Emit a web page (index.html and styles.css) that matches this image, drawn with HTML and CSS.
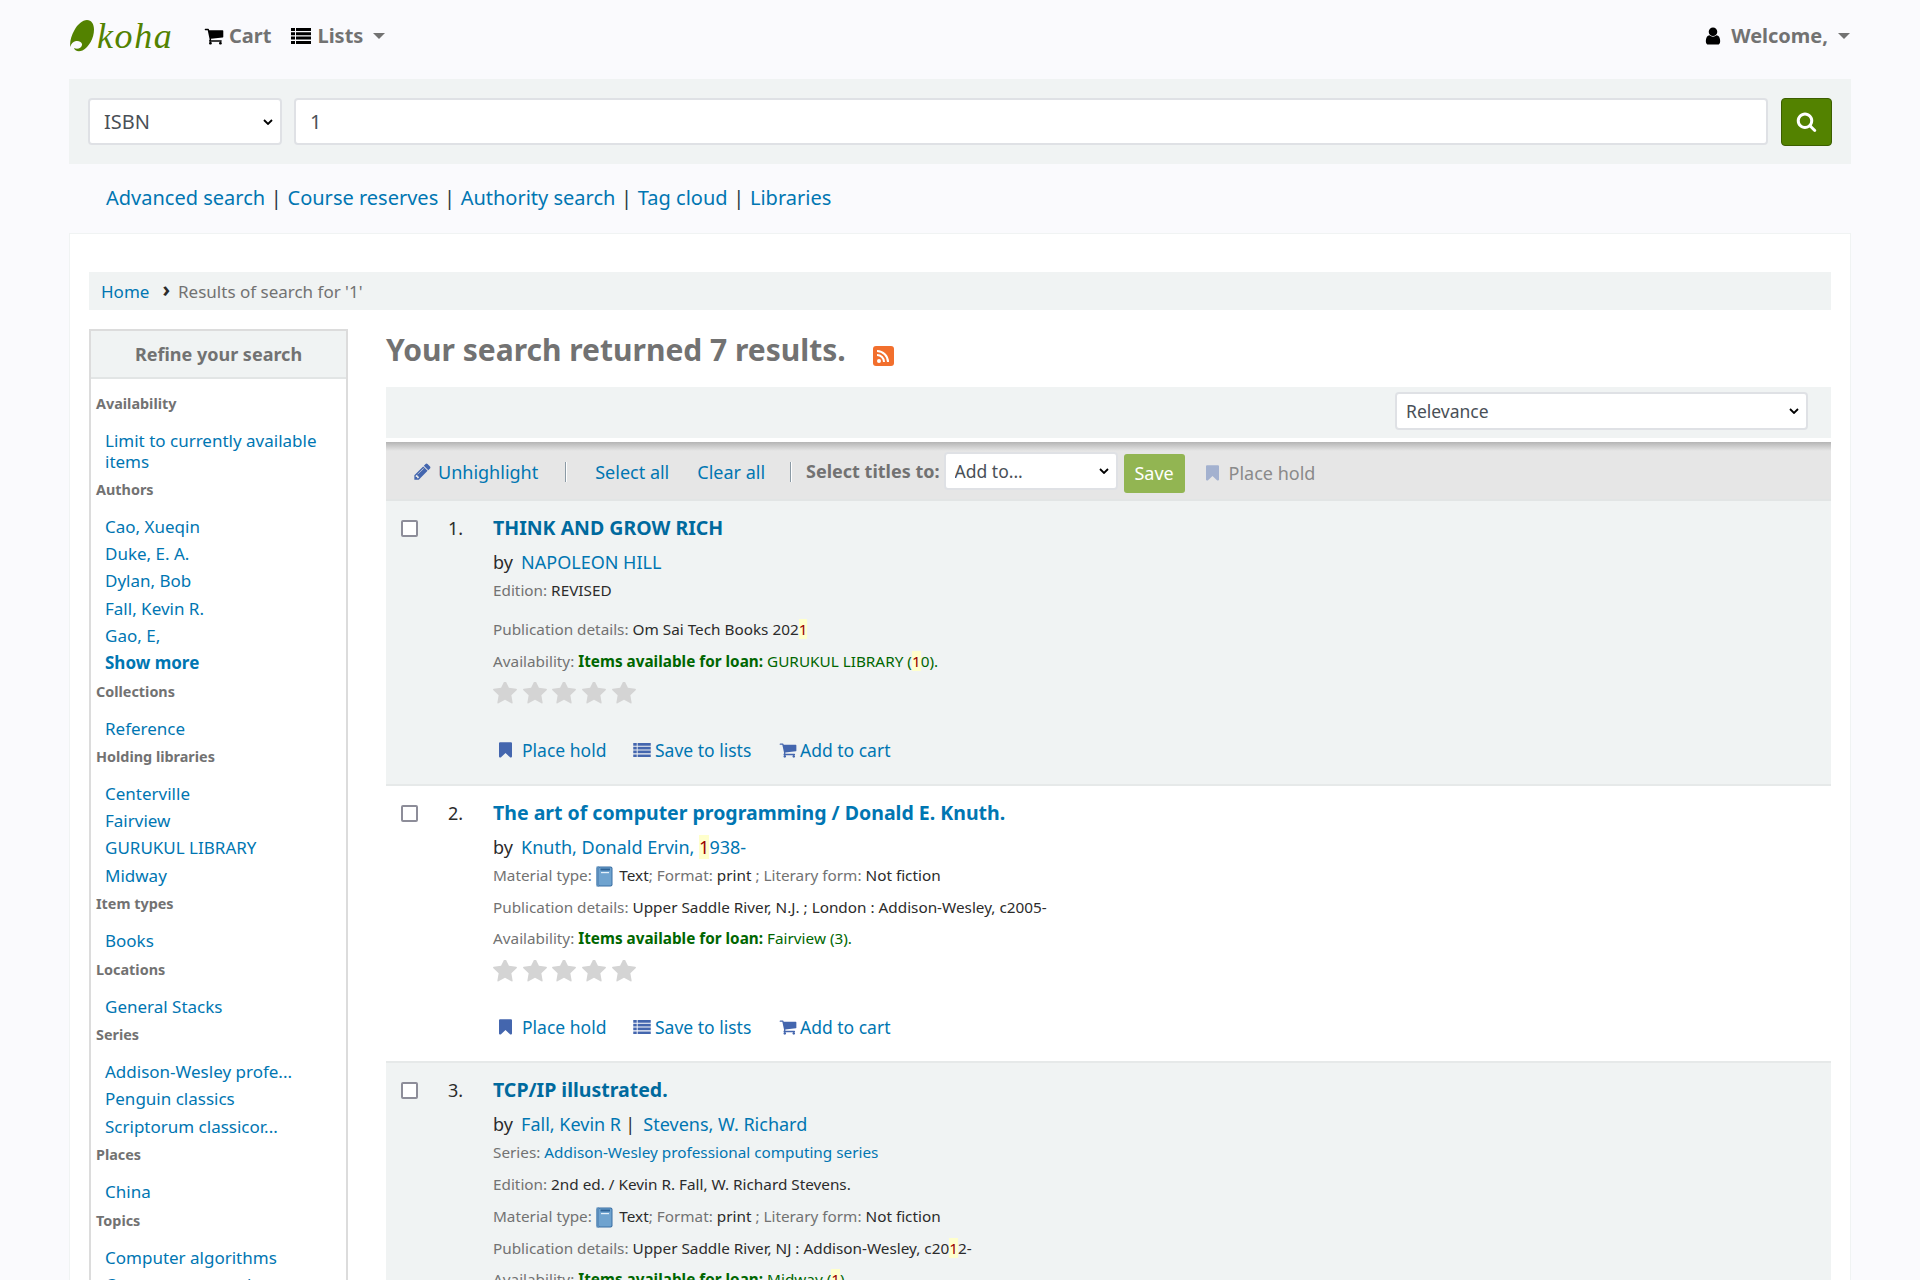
FILE: index.html
```html
<!DOCTYPE html>
<html lang="en">
<head>
<meta charset="utf-8">
<title>Koha online catalog</title>
<link rel="stylesheet" href="styles.css">
</head>
<body>
<svg class="sprite" aria-hidden="true">
  <symbol id="i-cart" viewBox="0 0 1792 1792"><path d="M704 1536q0 52-38 90t-90 38-90-38-38-90 38-90 90-38 90 38 38 90zm896 0q0 52-38 90t-90 38-90-38-38-90 38-90 90-38 90 38 38 90zm128-1088v512q0 24-16.5 42.5t-40.5 21.5l-1044 122q13 60 13 70 0 16-24 64h920q26 0 45 19t19 45-19 45-45 19h-1024q-26 0-45-19t-19-45q0-11 8-31.5t16-36 21.5-40 15.5-29.5l-177-823h-204q-26 0-45-19t-19-45 19-45 45-19h256q16 0 28.5 6.5t19.5 15.5 13 24.5 8 26 5.5 29.5 4.5 26h1201q26 0 45 19t19 45z"/></symbol>
  <symbol id="i-list" viewBox="0 0 20 16"><path d="M0 0h4v3H0zM5 0h15v3H5zM0 4.300h4v3H0zM5 4.300h15v3H5zM0 8.600h4v3H0zM5 8.600h15v3H5zM0 13h4v3H0zM5 13h15v3H5z"/></symbol>
  <symbol id="i-user" viewBox="0 0 1792 1792"><path d="M1536 1399q0 109-62.5 187t-150.5 78h-854q-88 0-150.5-78t-62.5-187q0-85 8.5-160.5t31.5-152 58.5-131 94-89 134.5-34.5q131 128 313 128t313-128q76 0 134.5 34.5t94 89 58.5 131 31.5 152 8.5 160.5zm-256-887q0 159-112.5 271.5t-271.5 112.5-271.5-112.5-112.5-271.5 112.5-271.5 271.5-112.5 271.5 112.5 112.5 271.5z"/></symbol>
  <symbol id="i-search" viewBox="0 0 1792 1792"><path d="M1216 832q0-185-131.5-316.5t-316.5-131.5-316.5 131.5-131.5 316.5 131.5 316.5 316.5 131.5 316.5-131.5 131.5-316.5zm512 832q0 52-38 90t-90 38q-54 0-90-38l-343-342q-179 124-399 124-143 0-273.5-55.5t-225-150-150-225-55.5-273.5 55.5-273.5 150-225 225-150 273.5-55.5 273.5 55.5 225 150 150 225 55.5 273.5q0 220-124 399l343 343q37 37 37 90z"/></symbol>
  <symbol id="i-mark" viewBox="256 128 1280 1536"><path d="M1420 128q23 0 44 9 33 13 52.5 41t19.5 62v1289q0 34-19.5 62t-52.5 41q-19 8-44 8-48 0-83-32l-441-424-441 424q-36 33-83 33-23 0-44-9-33-13-52.5-41t-19.5-62v-1289q0-34 19.5-62t52.5-41q21-9 44-9h1048z"/></symbol>
  <symbol id="i-pencil" viewBox="0 0 1792 1792"><path d="M491 1536l91-91-235-235-91 91v107h128v128h107zm523-928q0-22-22-22-10 0-17 7l-542 542q-7 7-7 17 0 22 22 22 10 0 17-7l542-542q7-7 7-17zm-54-192l416 416-832 832h-416v-416zm683 96q0 53-37 90l-166 166-416-416 166-165q36-38 90-38 53 0 91 38l235 234q37 39 37 91z"/></symbol>
  <symbol id="i-star" viewBox="64 128 1664 1600"><path d="M1728 647q0 22-26 48l-363 354 86 500q1 7 1 20 0 21-10.5 35.5t-30.5 14.5q-19 0-40-12l-449-236-449 236q-22 12-40 12-21 0-31.5-14.5t-10.5-35.5q0-6 2-20l86-500-364-354q-25-27-25-48 0-37 56-46l502-73 225-455q19-41 49-41t49 41l225 455 502 73q56 9 56 46z"/></symbol>
  <symbol id="i-book" viewBox="0 0 17 21"><rect x=".5" y=".5" width="16" height="20" rx="2" fill="#3a6fa3"/><rect x="3" y="1.500" width="12.500" height="18" rx="1" fill="#6fa3cf"/><rect x="4.500" y="2.500" width="9.500" height="2" fill="#2f6396"/><rect x="5" y="6" width="8" height="1.200" fill="#e4f0fa"/><rect x=".5" y=".5" width="2.500" height="20" fill="#5a8dbc"/></symbol>
</svg>

<header class="navbar">
  <a class="logo" href="#">
    <svg class="leaf" viewBox="0 0 24 32" aria-hidden="true"><path d="M17 0C21.500 0 24 4 24 9.500 24 18 19 27 12.500 30.500 8 32.500 4.500 30.500 4 28 7 29.500 11.500 28.500 12 25 12.400 22 9 20.500 6 21 3 21.500 1 24 .3 27-.4 22 1 16 4.500 10 7.500 4.500 12.500 0 17 0z"/></svg>
    <span class="logo-text">koha</span>
  </a>
  <a class="nav-item" href="#"><svg class="nav-ico cart"><use href="#i-cart"/></svg>Cart</a>
  <a class="nav-item" href="#"><svg class="nav-ico lists"><use href="#i-list"/></svg>Lists<span class="caret"></span></a>
  <a class="nav-item welcome" href="#"><svg class="nav-ico user"><use href="#i-user"/></svg>Welcome,<span class="caret"></span></a>
</header>

<form class="searchbar">
  <select class="idx"><option>ISBN</option></select>
  <input class="q" type="text" value="1">
  <button class="go" type="button" aria-label="Search"><svg><use href="#i-search"/></svg></button>
</form>

<nav class="morelinks">
  <a href="#">Advanced search</a><span>|</span><a href="#">Course reserves</a><span>|</span><a href="#">Authority search</a><span>|</span><a href="#">Tag cloud</a><span>|</span><a href="#">Libraries</a>
</nav>

<main class="box">
  <div class="crumbs"><a href="#">Home</a><span class="chev">›</span><span>Results of search for '1'</span></div>
  <div class="cols">
    <aside class="facets">
      <h2>Refine your search</h2>
      <div class="facet-body">
        <h3>Availability</h3>
        <ul><li><a href="#">Limit to currently available items</a></li></ul>
        <h3>Authors</h3>
        <ul><li><a href="#">Cao, Xueqin</a></li><li><a href="#">Duke, E. A.</a></li><li><a href="#">Dylan, Bob</a></li><li><a href="#">Fall, Kevin R.</a></li><li><a href="#">Gao, E,</a></li><li><a class="more" href="#">Show more</a></li></ul>
        <h3>Collections</h3>
        <ul><li><a href="#">Reference</a></li></ul>
        <h3>Holding libraries</h3>
        <ul><li><a href="#">Centerville</a></li><li><a href="#">Fairview</a></li><li><a href="#">GURUKUL LIBRARY</a></li><li><a href="#">Midway</a></li></ul>
        <h3>Item types</h3>
        <ul><li><a href="#">Books</a></li></ul>
        <h3>Locations</h3>
        <ul><li><a href="#">General Stacks</a></li></ul>
        <h3>Series</h3>
        <ul><li><a href="#">Addison-Wesley profe...</a></li><li><a href="#">Penguin classics</a></li><li><a href="#">Scriptorum classicor...</a></li></ul>
        <h3>Places</h3>
        <ul><li><a href="#">China</a></li></ul>
        <h3>Topics</h3>
        <ul><li><a href="#">Computer algorithms</a></li><li><a href="#">Computer networks</a></li></ul>
      </div>
    </aside>

    <section class="results">
      <div class="heading">
        <h1>Your search returned 7 results.</h1>
        <svg class="rss" viewBox="0 0 21 20" aria-hidden="true"><rect width="21" height="20" rx="3" fill="#f26f2d"/><circle cx="6" cy="15" r="2" fill="#fff"/><path d="M4 9a7 7 0 0 1 7 7M4 5a11 11 0 0 1 11 11" fill="none" stroke="#fff" stroke-width="2"/></svg>
      </div>
      <div class="sortbar"><select class="sort"><option>Relevance</option></select></div>
      <div class="toolbar">
        <a class="tool unh" href="#"><svg class="ico pencil"><use href="#i-pencil"/></svg>Unhighlight</a>
        <span class="rule r1"></span>
        <a class="tool sel" href="#">Select all</a>
        <a class="tool clr" href="#">Clear all</a>
        <span class="rule r2"></span>
        <b class="to">Select titles to:</b>
        <select class="addto"><option>Add to...</option></select>
        <button class="save" type="button">Save</button>
        <span class="hold-off"><svg class="ico mark"><use href="#i-mark"/></svg>Place hold</span>
      </div>

      <article class="row odd">
        <input class="chk" type="checkbox">
        <span class="num">1.</span>
        <div class="rec">
          <a class="title dark" href="#">THINK AND GROW RICH</a>
          <p class="by">by <a href="#">NAPOLEON HILL</a></p>
          <p class="meta gap"><span class="lab">Edition:</span> REVISED</p>
          <p class="meta"><span class="lab">Publication details:</span> Om Sai Tech Books 202<mark>1</mark></p>
          <p class="meta"><span class="lab">Availability:</span> <span class="ok"><b>Items available for loan:</b> GURUKUL LIBRARY (<mark>1</mark>0).</span></p>
          <div class="stars"><svg><use href="#i-star"/></svg><svg><use href="#i-star"/></svg><svg><use href="#i-star"/></svg><svg><use href="#i-star"/></svg><svg><use href="#i-star"/></svg></div>
          <div class="actions"><a class="act hold" href="#"><svg class="ico mark"><use href="#i-mark"/></svg>Place hold</a><a class="act save-l" href="#"><svg class="ico list"><use href="#i-list"/></svg>Save to lists</a><a class="act add" href="#"><svg class="ico cart2"><use href="#i-cart"/></svg>Add to cart</a></div>
        </div>
      </article>

      <article class="row">
        <input class="chk" type="checkbox">
        <span class="num">2.</span>
        <div class="rec">
          <a class="title" href="#">The art of computer programming / Donald E. Knuth.</a>
          <p class="by">by <a href="#">Knuth, Donald Ervin, <mark>1</mark>938-</a></p>
          <p class="meta"><span class="lab">Material type:</span> <svg class="book"><use href="#i-book"/></svg> Text<span class="lab">; Format:</span> print <span class="lab">; Literary form:</span> Not fiction</p>
          <p class="meta"><span class="lab">Publication details:</span> Upper Saddle River, N.J. ; London : Addison-Wesley, c2005-</p>
          <p class="meta"><span class="lab">Availability:</span> <span class="ok"><b>Items available for loan:</b> Fairview (3).</span></p>
          <div class="stars"><svg><use href="#i-star"/></svg><svg><use href="#i-star"/></svg><svg><use href="#i-star"/></svg><svg><use href="#i-star"/></svg><svg><use href="#i-star"/></svg></div>
          <div class="actions"><a class="act hold" href="#"><svg class="ico mark"><use href="#i-mark"/></svg>Place hold</a><a class="act save-l" href="#"><svg class="ico list"><use href="#i-list"/></svg>Save to lists</a><a class="act add" href="#"><svg class="ico cart2"><use href="#i-cart"/></svg>Add to cart</a></div>
        </div>
      </article>

      <article class="row odd">
        <input class="chk" type="checkbox">
        <span class="num">3.</span>
        <div class="rec">
          <a class="title dark" href="#">TCP/IP illustrated.</a>
          <p class="by">by <a href="#">Fall, Kevin R</a> <span class="pipe">|</span> <a href="#">Stevens, W. Richard</a></p>
          <p class="meta"><span class="lab">Series:</span> <a href="#">Addison-Wesley professional computing series</a></p>
          <p class="meta"><span class="lab">Edition:</span> 2nd ed. / Kevin R. Fall, W. Richard Stevens.</p>
          <p class="meta"><span class="lab">Material type:</span> <svg class="book"><use href="#i-book"/></svg> Text<span class="lab">; Format:</span> print <span class="lab">; Literary form:</span> Not fiction</p>
          <p class="meta"><span class="lab">Publication details:</span> Upper Saddle River, NJ : Addison-Wesley, c20<mark>1</mark>2-</p>
          <p class="meta"><span class="lab">Availability:</span> <span class="ok"><b>Items available for loan:</b> Midway (<mark>1</mark>).</span></p>
        </div>
      </article>
    </section>
  </div>
</main>
</body>
</html>
```

FILE: styles.css
```css
* { box-sizing: border-box; }
html, body { height: 1280px; overflow: hidden; }
body {
  margin: 0;
  padding: 0 69px;
  background: #fafafd;
  color: #2b2b2b;
  font-family: "Noto Sans", sans-serif;
  font-size: 18px;
}
a { color: #0076b2; text-decoration: none; }
.sprite { display: none; }
p { margin: 0; }

/* native selects, with the larger chevron of the reference */
select {
  appearance: none;
  background: #fff url("data:image/svg+xml,%3Csvg xmlns='http://www.w3.org/2000/svg' viewBox='0 0 10 6'%3E%3Cpath d='M1 1l4 4 4-4' fill='none' stroke='%23000' stroke-width='1.800'/%3E%3C/svg%3E") no-repeat right 7px center / 10px 6px;
}

/* top bar */
.navbar { display: flex; align-items: center; height: 79px; padding-bottom: 8px; }
.logo { display: flex; align-items: center; width: 135px; color: #538200; }
.leaf { width: 24px; height: 32px; fill: #538200; margin: 1px 0 0 1px; }
.logo-text {
  font-family: "Liberation Serif", serif;
  font-style: italic;
  font-size: 36px;
  line-height: 40px;
  letter-spacing: 1.600px;
  margin-left: 3px;
}
.nav-item {
  display: flex;
  align-items: center;
  font-size: 20px;
  font-weight: 700;
  color: #727272;
  margin-right: 20px;
}
.nav-ico { fill: #000; margin-right: 6px; }
.nav-ico.cart { width: 20px; height: 20px; margin-right: 5px; }
.nav-ico.lists { width: 20px; height: 18px; }
.nav-ico.user { width: 20px; height: 20px; margin-right: 8px; }
.caret {
  border-top: 6px solid #727272;
  border-left: 6px solid transparent;
  border-right: 6px solid transparent;
  margin-left: 10px;
}
.welcome { margin: 0 1px 0 auto; }

/* search */
.searchbar {
  display: flex;
  align-items: center;
  height: 85px;
  padding: 0 19px;
  background: #f0f3f3;
}
.idx, .q {
  height: 47px;
  border: 2px solid #dfe1e5;
  border-radius: 4px;
  color: #495057;
  font: 20px "Noto Sans", sans-serif;
}
.q { background: #fff; }
.idx { width: 194px; padding: 0 8px 0 14px; }
.q { flex: 1; margin: 0 13px 0 12px; padding: 0 14px; }
.go {
  width: 51px;
  height: 48px;
  padding: 0;
  display: flex;
  align-items: center;
  justify-content: center;
  background: #538200;
  border: 1px solid #3c5e00;
  border-radius: 4px;
}
.go svg { width: 21px; height: 21px; fill: #fff; }

.morelinks {
  display: flex;
  align-items: center;
  height: 69px;
  padding: 0 0 2px 37px;
  font-size: 20px;
  color: #2b3a44;
}
.morelinks span { margin: 0 5.700px; }

/* content box */
.box {
  height: 1100px;
  padding: 38px 19px 0;
  background: #fff;
  border: 1px solid #f0f3f3;
}
.crumbs {
  display: flex;
  align-items: center;
  height: 38px;
  padding-left: 12px;
  background: #f0f3f3;
  font-size: 17px;
  color: #727272;
}
.chev { color: #2b2b2b; font-weight: 700; margin: -4px 8px 0 13px; font-size: 21px; }
.cols { display: flex; align-items: flex-start; margin-top: 19px; }

/* facets */
.facets { width: 259px; flex: none; border: 2px solid #dcdcdc; border-bottom: 0; margin-right: 38px; }
.facets h2 {
  margin: 0;
  height: 48px;
  line-height: 47px;
  text-align: center;
  font-size: 18px;
  font-weight: 700;
  color: #727272;
  background: #f0f3f3;
  border-bottom: 2px solid #e2e5e5;
}
.facet-body { padding: 9.100px 5px 0; }
.facets h3 {
  margin: 5.600px 0 12.750px;
  font-size: 14.400px;
  line-height: 20px;
  font-weight: 700;
  color: #727272;
}
.facets ul { list-style: none; margin: 0; padding: 0 0 0 9px; }
.facets li { padding: 3.100px 0; font-size: 17px; line-height: 21px; }
.more { font-weight: 700; }

/* results column */
.results { flex: 1; min-width: 0; }
.heading { display: flex; align-items: flex-start; height: 58px; }
.heading h1 {
  margin: 1px 27px 0 0;
  font-size: 30px;
  font-weight: 700;
  color: #727272;
  line-height: 40px;
}
.rss { width: 21px; height: 20px; margin-top: 17px; }
.sortbar {
  display: flex;
  justify-content: flex-end;
  align-items: center;
  height: 51px;
  padding: 0 23px 3px 0;
  background: #f0f3f3;
}
.sort, .addto {
  border: 2px solid #dfe1e5;
  border-radius: 4px;
  color: #495057;
  font: 17.500px "Noto Sans", sans-serif;
}
.sort { width: 413px; height: 38px; padding: 0 6px 0 9px; }

.toolbar {
  display: flex;
  align-items: center;
  height: 59px;
  margin-top: 4px;
  padding: 3px 0 0 28px;
  background: linear-gradient(#b4b4b4, #e6e6e6 9px);
  border-bottom: 2px solid #e2e5e5;
}
.tool { font-size: 18px; line-height: 28px; }
.ico { fill: #4466ae; }
.ico.pencil { width: 19px; height: 19px; margin: 0 6px -2px -1px; vertical-align: baseline; }
.rule { width: 1px; height: 20px; background: #8b9aa5; box-shadow: 1px 0 0 #fff; }
.r1 { margin: 0 29px 0 27px; }
.sel { margin-right: 28px; }
.r2 { margin: 0 15px 0 25px; }
.to { font-size: 18px; color: #727272; margin: -2px 4px 0 0; }
.addto { width: 174px; height: 38px; padding: 0 6px 0 9px; margin-top: -3px; }
.save {
  width: 61px;
  height: 39px;
  margin: 2px 21px 0 6px;
  padding: 0;
  border: 0;
  border-radius: 3px;
  background: #92b552;
  color: #fff;
  font: 18px "Noto Sans", sans-serif;
}
.hold-off { display: flex; align-items: center; margin-top: 2px; color: #8a8a8a; font-size: 18px; }
.hold-off .ico { width: 13px; height: 16px; margin-right: 10px; fill: #a3b1cf; }

/* result rows */
.row {
  display: grid;
  grid-template-columns: 47px 45px 1fr;
  padding: 13px 0 22px 15px;
  border-bottom: 2px solid #e6e9e9;
}
.odd { background: #f0f3f3; }
.chk {
  appearance: none;
  width: 17px;
  height: 17px;
  margin: 6px 0 0;
  background: #fff;
  border: 2px solid #8d8d99;
  border-radius: 2px;
}
.num { font-size: 18px; line-height: 28px; }
.rec { min-width: 0; }
.title { display: block; font-size: 19.500px; font-weight: 700; line-height: 28px; }
.dark { color: #006a9e; }
.by { font-size: 18px; line-height: 24px; margin: 8px 0 4px; }
.by a { margin-left: 3.500px; }
.by .pipe { margin: 0 0 0 -.5px; }
.meta { font-size: 15.300px; line-height: 24px; margin-bottom: 7.700px; }
.meta.gap { margin-bottom: 15px; }
.lab { color: #727272; }
.meta a { color: #0076b2; }
.ok { color: #060; }
.ok b { font-weight: 700; }
mark { background: #ffc; color: #900; }
.book { width: 17px; height: 21px; margin: 0 2.500px -6px 0; }
.stars { display: flex; gap: 5.700px; height: 25.500px; padding-top: 1.500px; align-items: center; }
.stars svg { width: 24px; height: 23px; fill: #d4d4d4; }
.actions { display: flex; align-items: center; height: 24px; margin-top: 32px; font-size: 17.500px; }
.act { display: flex; align-items: center; }
.hold { margin-left: 6px; width: 134px; }
.save-l { width: 146px; }
.ico.mark { width: 13px; height: 16px; margin-right: 10px; }
.ico.list { width: 18px; height: 14px; margin-right: 4px; }
.ico.cart2 { width: 18px; height: 18px; margin-right: 3px; }
```
